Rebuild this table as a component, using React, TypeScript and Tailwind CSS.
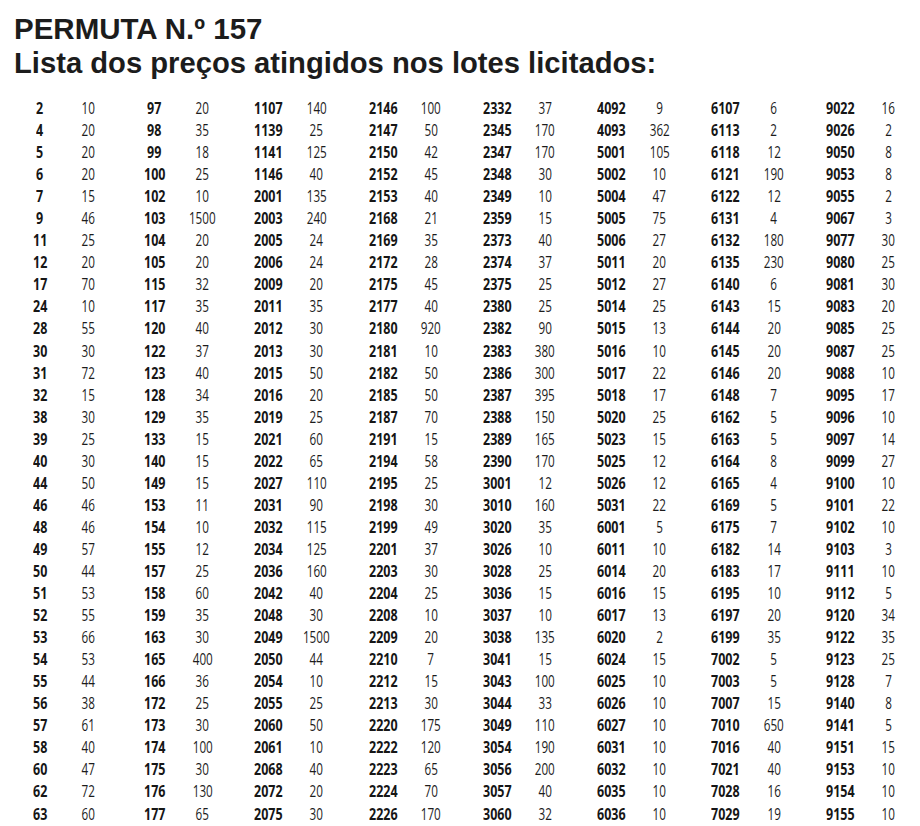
import React from "react";

const cols: [number[], number[]][] = [
  [
    [2, 4, 5, 6, 7, 9, 11, 12, 17, 24, 28, 30, 31, 32, 38, 39, 40, 44, 46, 48, 49, 50, 51, 52, 53, 54, 55, 56, 57, 58, 60, 62, 63],
    [10, 20, 20, 20, 15, 46, 25, 20, 70, 10, 55, 30, 72, 15, 30, 25, 30, 50, 46, 46, 57, 44, 53, 55, 66, 53, 44, 38, 61, 40, 47, 72, 60],
  ],
  [
    [97, 98, 99, 100, 102, 103, 104, 105, 115, 117, 120, 122, 123, 128, 129, 133, 140, 149, 153, 154, 155, 157, 158, 159, 163, 165, 166, 172, 173, 174, 175, 176, 177],
    [20, 35, 18, 25, 10, 1500, 20, 20, 32, 35, 40, 37, 40, 34, 35, 15, 15, 15, 11, 10, 12, 25, 60, 35, 30, 400, 36, 25, 30, 100, 30, 130, 65],
  ],
  [
    [1107, 1139, 1141, 1146, 2001, 2003, 2005, 2006, 2009, 2011, 2012, 2013, 2015, 2016, 2019, 2021, 2022, 2027, 2031, 2032, 2034, 2036, 2042, 2048, 2049, 2050, 2054, 2055, 2060, 2061, 2068, 2072, 2075],
    [140, 25, 125, 40, 135, 240, 24, 24, 20, 35, 30, 30, 50, 20, 25, 60, 65, 110, 90, 115, 125, 160, 40, 30, 1500, 44, 10, 25, 50, 10, 40, 20, 30],
  ],
  [
    [2146, 2147, 2150, 2152, 2153, 2168, 2169, 2172, 2175, 2177, 2180, 2181, 2182, 2185, 2187, 2191, 2194, 2195, 2198, 2199, 2201, 2203, 2204, 2208, 2209, 2210, 2212, 2213, 2220, 2222, 2223, 2224, 2226],
    [100, 50, 42, 45, 40, 21, 35, 28, 45, 40, 920, 10, 50, 50, 70, 15, 58, 25, 30, 49, 37, 30, 25, 10, 20, 7, 15, 30, 175, 120, 65, 70, 170],
  ],
  [
    [2332, 2345, 2347, 2348, 2349, 2359, 2373, 2374, 2375, 2380, 2382, 2383, 2386, 2387, 2388, 2389, 2390, 3001, 3010, 3020, 3026, 3028, 3036, 3037, 3038, 3041, 3043, 3044, 3049, 3054, 3056, 3057, 3060],
    [37, 170, 170, 30, 10, 15, 40, 37, 25, 25, 90, 380, 300, 395, 150, 165, 170, 12, 160, 35, 10, 25, 15, 10, 135, 15, 100, 33, 110, 190, 200, 40, 32],
  ],
  [
    [4092, 4093, 5001, 5002, 5004, 5005, 5006, 5011, 5012, 5014, 5015, 5016, 5017, 5018, 5020, 5023, 5025, 5026, 5031, 6001, 6011, 6014, 6016, 6017, 6020, 6024, 6025, 6026, 6027, 6031, 6032, 6035, 6036],
    [9, 362, 105, 10, 47, 75, 27, 20, 27, 25, 13, 10, 22, 17, 25, 15, 12, 12, 22, 5, 10, 20, 15, 13, 2, 15, 10, 10, 10, 10, 10, 10, 10],
  ],
  [
    [6107, 6113, 6118, 6121, 6122, 6131, 6132, 6135, 6140, 6143, 6144, 6145, 6146, 6148, 6162, 6163, 6164, 6165, 6169, 6175, 6182, 6183, 6195, 6197, 6199, 7002, 7003, 7007, 7010, 7016, 7021, 7028, 7029],
    [6, 2, 12, 190, 12, 4, 180, 230, 6, 15, 20, 20, 20, 7, 5, 5, 8, 4, 5, 7, 14, 17, 10, 20, 35, 5, 5, 15, 650, 40, 40, 16, 19],
  ],
  [
    [9022, 9026, 9050, 9053, 9055, 9067, 9077, 9080, 9081, 9083, 9085, 9087, 9088, 9095, 9096, 9097, 9099, 9100, 9101, 9102, 9103, 9111, 9112, 9120, 9122, 9123, 9128, 9140, 9141, 9151, 9153, 9154, 9155],
    [16, 2, 8, 8, 2, 3, 30, 25, 30, 20, 25, 25, 10, 17, 10, 14, 27, 10, 22, 10, 3, 10, 5, 34, 35, 25, 7, 8, 5, 15, 10, 10, 10],
  ],
];

export default function App() {
  return (
    <div className="w-[920px] h-[826px] bg-white overflow-hidden text-[#1c1c1c]">
      <div className="pt-[12px] pl-[14px] font-['Liberation_Sans',Arial,sans-serif] font-bold leading-[34px]">
        <div className="text-[29.5px]">PERMUTA N.º 157</div>
        <div className="text-[29.2px]">Lista dos preços atingidos nos lotes licitados:</div>
      </div>
      <div className="mt-[17px] pl-[16px] flex font-['Open_Sans',sans-serif] text-[16px] leading-[22.06px]">
        {cols.map(([lots, vals], ci) => (
          <div key={ci} className="w-[114.3px] shrink-0 flex flex-col">
            {lots.map((lot, ri) => (
              <div key={ri} className="flex h-[22.06px]">
                <div className="w-[48px] text-center font-bold text-[#161616]">
                  <span className="inline-block scale-x-[0.78]">{lot}</span>
                </div>
                <div className="w-[48px] text-center">
                  <span className="inline-block scale-x-[0.73]">{vals[ri]}</span>
                </div>
              </div>
            ))}
          </div>
        ))}
      </div>
    </div>
  );
}
